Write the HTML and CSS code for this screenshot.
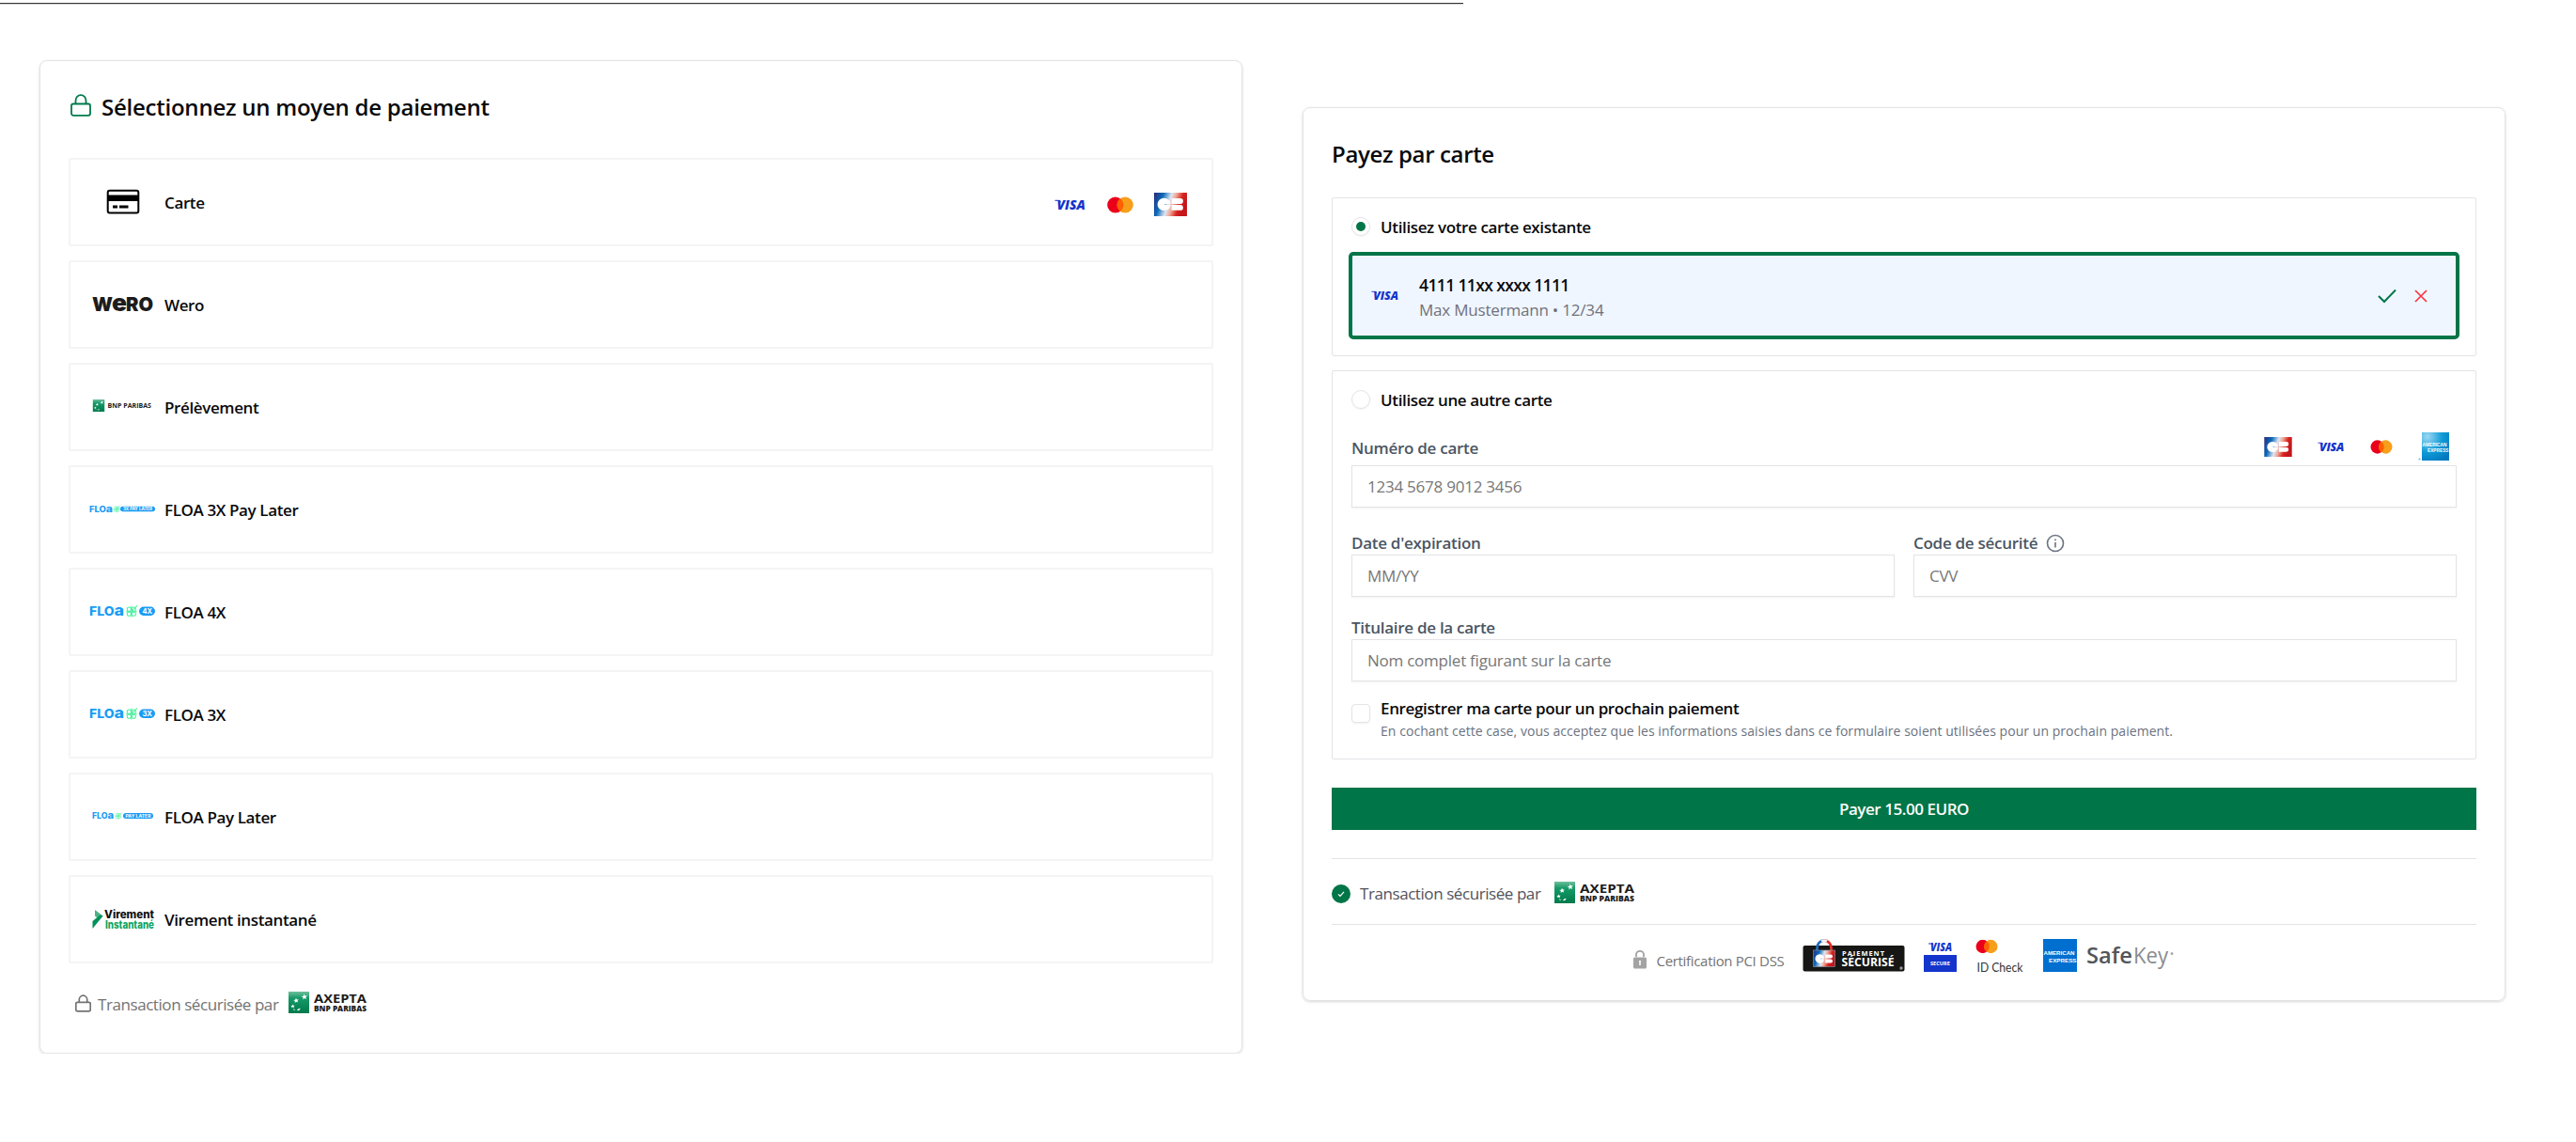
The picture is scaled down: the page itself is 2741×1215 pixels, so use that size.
FILE: index.html
```html
<!DOCTYPE html>
<html lang="fr">

<head>
    <meta charset="UTF-8">
    <meta name="viewport" content="width=device-width, initial-scale=1.0">
    <title>Paiement</title>
    <link rel="stylesheet" href="styles.css">
</head>

<body>
    <!-- shared shapes -->
    <svg class="defs" width="0" height="0">
        <defs>
            <linearGradient id="cbGrad" x1="0" y1="0" x2="1" y2="0.25">
                <stop offset="0" stop-color="#2b2a7c" />
                <stop offset="0.28" stop-color="#0a6ab8" />
                <stop offset="0.52" stop-color="#dfe6f2" />
                <stop offset="0.66" stop-color="#f0a898" />
                <stop offset="0.85" stop-color="#d8231f" />
                <stop offset="1" stop-color="#c4161c" />
            </linearGradient>
            <linearGradient id="bnpGrad" x1="0" y1="0" x2="0" y2="1">
                <stop offset="0" stop-color="#6fbf9b" />
                <stop offset="0.3" stop-color="#169a68" />
                <stop offset="1" stop-color="#007a4b" />
            </linearGradient>
            <radialGradient id="amexGrad" cx="0.2" cy="0.15" r="1">
                <stop offset="0" stop-color="#9bd8f3" />
                <stop offset="0.55" stop-color="#109bd7" />
                <stop offset="1" stop-color="#0078bf" />
            </radialGradient>
        </defs>
        <symbol id="mastercard" viewBox="0 0 28 18">
            <circle cx="8.8" cy="9" r="8.6" fill="#eb001b" />
            <circle cx="19.2" cy="9" r="8.6" fill="#f79e1b" />
            <path d="M14 2.2a8.6 8.6 0 0 1 0 13.6a8.6 8.6 0 0 1 0-13.6z" fill="#ff5f00" />
        </symbol>
        <symbol id="cb" viewBox="0 0 35 25">
            <rect width="35" height="25" fill="url(#cbGrad)" />
            <path d="M17.6 11.9H11v1.1h6.6a7 6.6 0 1 1 0-1.1z" fill="#fff" />
            <path d="M18.6 6.1H28a2.9 2.9 0 0 1 0 5.8h-9.4zM18.6 13H28a2.9 2.9 0 0 1 0 5.8h-9.4z" fill="#fff" />
        </symbol>
        <symbol id="bnp" viewBox="0 0 22 23">
            <rect width="22" height="23" fill="url(#bnpGrad)" />
            <path d="M16.5 2.5l1 2 2.3-.4-1.5 1.8 1 2-2.2-.9-1.7 1.5.2-2.3-2-1 2.3-.5zM8 6.8l.9 1.7 2-.2-1.4 1.5.6 1.8-1.8-.8-1.6 1.2.2-1.9-1.7-1 1.9-.4zM4.3 13.5l.7 1.3 1.6-.1-1 1.1.4 1.4-1.4-.6-1.2.9.1-1.5-1.3-.8 1.5-.3zM10 18.5l2.8-.8-1.5 2.2-2.3.3zM5.5 18l1.8 1.8-2-.2z" fill="#fff" />
        </symbol>
        <symbol id="clover" viewBox="0 0 13 13">
            <g fill="none" stroke="#4df0a0" stroke-width="1">
                <circle cx="3.700" cy="4.500" r="2" />
                <circle cx="8.500" cy="4.500" r="2" />
                <circle cx="3.700" cy="9.300" r="2" />
                <circle cx="8.500" cy="9.300" r="2" />
                <path d="M6.100 6.900L12 0.800M6.100 1v11.500M0.500 6.900h11.200" />
            </g>
        </symbol>
        <symbol id="lock" viewBox="0 0 22 24">
            <rect x="1" y="10.500" width="20" height="12.300" rx="2" />
            <path d="M5.500 10.500V7a5.500 5.800 0 0 1 11 0v3.500" />
        </symbol>
    </svg>

    <div class="top-line"></div>

    <div class="page">
        <div class="card methods">
            <h2 class="title">
                <svg class="title-lock" width="22" height="24"><use href="#lock" /></svg>
                <span>Sélectionnez un moyen de paiement</span>
            </h2>

            <div class="method-list">
                <div class="method">
                    <svg class="method-logo" viewBox="0 0 70 30">
                        <rect x="19.700" y="2.700" width="32.600" height="23.800" rx="2" fill="none" stroke="#000" stroke-width="2" />
                        <path d="M19 7.500h34v6.500H19zM25 18.500h5v3h-5zM32 18.500h9.500v3H32z" />
                    </svg>
                    <span class="method-name">Carte</span>
                    <div class="brands">
                        <svg width="34" height="12" viewBox="0 0 34 12">
                            <path class="visa-flag" d="M0.500 1.300h5l1 2" />
                            <text class="visa-text" x="2.500" y="11" textLength="30.500" lengthAdjust="spacingAndGlyphs">VISA</text>
                        </svg>
                        <svg width="28" height="18"><use href="#mastercard" /></svg>
                        <svg width="35" height="25"><use href="#cb" /></svg>
                    </div>
                </div>
                <div class="method">
                    <svg class="method-logo" viewBox="0 0 70 30">
                        <text class="wero" x="3" y="21.500" textLength="22" lengthAdjust="spacingAndGlyphs">W</text>
                        <text class="wero wero-e" x="24" y="21.500" textLength="16" lengthAdjust="spacingAndGlyphs">e</text>
                        <text class="wero" x="39" y="21.500" textLength="29" lengthAdjust="spacingAndGlyphs">RO</text>
                    </svg>
                    <span class="method-name">Wero</span>
                </div>
                <div class="method">
                    <svg class="method-logo" viewBox="0 0 70 30">
                        <use href="#bnp" x="3" y="7" width="14" height="13" />
                        <text class="bnp-text" x="19.500" y="16" textLength="46.500" lengthAdjust="spacingAndGlyphs">BNP PARIBAS</text>
                    </svg>
                    <span class="method-name">Prélèvement</span>
                </div>
                <div class="method">
                    <svg class="method-logo" viewBox="0 0 70 30">
                        <text class="floa floa-s" x="0" y="17.500" textLength="25" lengthAdjust="spacingAndGlyphs">FLO<tspan class="floa-a-s">a</tspan></text>
                        <use href="#clover" x="25.500" y="10.500" width="8" height="8" />
                        <rect x="33" y="11.800" width="37" height="5.400" rx="2.700" fill="#1a9cf5" />
                        <text class="pill pill-s" x="36" y="16.200" textLength="31" lengthAdjust="spacingAndGlyphs">3X PAY LATER</text>
                    </svg>
                    <span class="method-name">FLOA 3X Pay Later</span>
                </div>
                <div class="method">
                    <svg class="method-logo" viewBox="0 0 70 30">
                        <text class="floa" x="0" y="18.800" textLength="37" lengthAdjust="spacingAndGlyphs">FLO<tspan class="floa-a">a</tspan></text>
                        <use href="#clover" x="38.500" y="7.500" width="13.500" height="13.500" />
                        <rect x="53" y="9.500" width="17" height="9.500" rx="4.700" fill="#1a9cf5" />
                        <text class="pill" x="56.500" y="17" textLength="10.500" lengthAdjust="spacingAndGlyphs">4X</text>
                    </svg>
                    <span class="method-name">FLOA 4X</span>
                </div>
                <div class="method">
                    <svg class="method-logo" viewBox="0 0 70 30">
                        <text class="floa" x="0" y="18.800" textLength="37" lengthAdjust="spacingAndGlyphs">FLO<tspan class="floa-a">a</tspan></text>
                        <use href="#clover" x="38.500" y="7.500" width="13.500" height="13.500" />
                        <rect x="53" y="9.500" width="17" height="9.500" rx="4.700" fill="#1a9cf5" />
                        <text class="pill" x="56.500" y="17" textLength="10.500" lengthAdjust="spacingAndGlyphs">3X</text>
                    </svg>
                    <span class="method-name">FLOA 3X</span>
                </div>
                <div class="method">
                    <svg class="method-logo" viewBox="0 0 70 30">
                        <text class="floa floa-s" x="3" y="17" textLength="23" lengthAdjust="spacingAndGlyphs">FLO<tspan class="floa-a-s">a</tspan></text>
                        <use href="#clover" x="27" y="10" width="8" height="8" />
                        <rect x="36" y="11" width="32" height="6" rx="3" fill="#1a9cf5" />
                        <text class="pill pill-s" x="38.500" y="15.700" textLength="27" lengthAdjust="spacingAndGlyphs">PAY LATER</text>
                    </svg>
                    <span class="method-name">FLOA Pay Later</span>
                </div>
                <div class="method">
                    <svg class="method-logo" viewBox="0 0 70 30">
                        <path d="M6 5l8.500 6.500-3.500 4-5-4z" fill="#4fb286" />
                        <path d="M14.500 11.500L3.500 25v-8l8-6.500z" fill="#00915a" />
                        <text class="vir" x="16" y="14.300" textLength="53" lengthAdjust="spacingAndGlyphs">Virement</text>
                        <text class="vir vir-green" x="17" y="24.500" textLength="52" lengthAdjust="spacingAndGlyphs">Instantané</text>
                    </svg>
                    <span class="method-name">Virement instantané</span>
                </div>
            </div>

            <div class="secured">
                <svg class="secured-lock" width="17" height="19"><use href="#lock" /></svg>
                <span class="secured-text">Transaction sécurisée par</span>
                <svg class="secured-logo" width="84" height="24" viewBox="0 0 84 24">
                    <use href="#bnp" width="22" height="23" />
                    <text class="axepta-name" x="27" y="11.800" textLength="56" lengthAdjust="spacingAndGlyphs">AXEPTA</text>
                    <text class="axepta-sub" x="27" y="20.500" textLength="56" lengthAdjust="spacingAndGlyphs">BNP PARIBAS</text>
                </svg>
            </div>
        </div>

        <div class="card payment">
            <h2 class="title pay-title">Payez par carte</h2>

            <div class="box existing">
                <div class="radio-row">
                    <span class="radio checked"></span>
                    <span class="strong">Utilisez votre carte existante</span>
                </div>
                <div class="saved-card">
                    <svg width="30" height="11" viewBox="0 0 34 12">
                        <path class="visa-flag" d="M0.500 1.300h5l1 2" />
                        <text class="visa-text" x="2.500" y="11" textLength="30.500" lengthAdjust="spacingAndGlyphs">VISA</text>
                    </svg>
                    <div class="saved-info">
                        <div class="saved-number">4111 11xx xxxx 1111</div>
                        <div class="saved-holder">Max Mustermann • 12/34</div>
                    </div>
                    <svg class="check" width="20" height="16" viewBox="0 0 20 16"><path d="M1 8l6 6L19 1.500" /></svg>
                    <svg class="cross" width="14" height="14" viewBox="0 0 14 14"><path d="M1 1l12 12M13 1L1 13" /></svg>
                </div>
            </div>

            <div class="box other">
                <div class="radio-row">
                    <span class="radio"></span>
                    <span class="strong">Utilisez une autre carte</span>
                </div>
                <div class="label number-label">
                    <span class="number-text">Numéro de carte</span>
                    <div class="number-brands">
                        <svg width="30" height="21"><use href="#cb" /></svg>
                        <svg width="29" height="10.500" viewBox="0 0 34 12">
                            <path class="visa-flag" d="M0.500 1.300h5l1 2" />
                            <text class="visa-text" x="2.500" y="11" textLength="30.500" lengthAdjust="spacingAndGlyphs">VISA</text>
                        </svg>
                        <svg width="24" height="15"><use href="#mastercard" /></svg>
                        <svg width="33" height="30" viewBox="0 0 33 30">
                            <rect x="4" width="29" height="30" fill="url(#amexGrad)" />
                            <text class="amex" x="4.500" y="15" textLength="26" lengthAdjust="spacingAndGlyphs">AMERICAN</text>
                            <text class="amex" x="10" y="21" textLength="22.500" lengthAdjust="spacingAndGlyphs">EXPRESS</text>
                            <circle cx="1.500" cy="28.500" r="1.100" fill="#6fc0e6" />
                        </svg>
                    </div>
                </div>
                <input class="field" type="text" placeholder="1234 5678 9012 3456">
                <div class="columns">
                    <div>
                        <div class="label">Date d'expiration</div>
                        <input class="field" type="text" placeholder="MM/YY">
                    </div>
                    <div>
                        <div class="label">Code de sécurité
                            <svg class="info" width="20" height="20" viewBox="0 0 20 20"><circle cx="10" cy="10" r="8.500" /><path d="M10 9v5.500M10 5.500v1.700" /></svg>
                        </div>
                        <input class="field" type="text" placeholder="CVV">
                    </div>
                </div>
                <div class="label holder-label">Titulaire de la carte</div>
                <input class="field" type="text" placeholder="Nom complet figurant sur la carte">
                <div class="save-row">
                    <span class="checkbox"></span>
                    <div>
                        <div class="strong">Enregistrer ma carte pour un prochain paiement</div>
                        <div class="save-note">En cochant cette case, vous acceptez que les informations saisies dans ce formulaire soient utilisées pour un prochain paiement.</div>
                    </div>
                </div>
            </div>

            <button class="pay" type="button">Payer 15.00 EURO</button>

            <div class="secured-right">
                <svg width="20" height="20" viewBox="0 0 20 20">
                    <circle cx="10" cy="10" r="10" fill="#007547" />
                    <path d="M7 10.300l2 2 4-4.500" fill="none" stroke="#fff" stroke-width="1.200" />
                </svg>
                <span class="secured-text">Transaction sécurisée par</span>
                <svg class="secured-logo" width="86" height="24" viewBox="0 0 86 24">
                    <use href="#bnp" width="22" height="23" />
                    <text class="axepta-name" x="27" y="11.800" textLength="58" lengthAdjust="spacingAndGlyphs">AXEPTA</text>
                    <text class="axepta-sub" x="27" y="20.500" textLength="58" lengthAdjust="spacingAndGlyphs">BNP PARIBAS</text>
                </svg>
            </div>

            <div class="certifications">
                <svg class="pci-lock" width="14" height="20" viewBox="0 0 14 20">
                    <rect y="7.500" width="14" height="12" rx="1.500" fill="#a3a3a3" />
                    <path d="M3 7V4.500a4 3.700 0 0 1 8 0V7" fill="none" stroke="#a3a3a3" stroke-width="1.800" />
                    <path d="M7 11v5M6 11.800h2" stroke="#fff" stroke-width="1.500" />
                </svg>
                <span class="pci">Certification PCI DSS</span>
                <svg width="109" height="36" viewBox="0 0 109 36">
                    <rect x="0.500" y="7" width="108" height="27.500" rx="2" fill="#161615" />
                    <path d="M15.500 13V9.500a7.500 8 0 0 1 7.500-8" fill="none" stroke="#1e6dbb" stroke-width="2.800" />
                    <path d="M23 1.500a7.500 8 0 0 1 7.500 8V13" fill="none" stroke="#e0302c" stroke-width="2.800" />
                    <path d="M20 2.300a7.500 8 0 0 1 6 0" fill="none" stroke="#f2f2f2" stroke-width="2.800" />
                    <rect x="11.500" y="12" width="23" height="17.500" fill="url(#cbGrad)" stroke="#8a9bb0" stroke-width="0.600" />
                    <path d="M23 20.500h-4v1h4a4.800 4.600 0 1 1 0-1zM24.200 16.500H30a2 2 0 0 1 0 4h-5.800zM24.200 21.500H30a2 2 0 0 1 0 4h-5.800z" fill="#fff" />
                    <text class="badge-small" x="42" y="17.500" textLength="45" lengthAdjust="spacing">PAIEMENT</text>
                    <text class="badge-big" x="41.500" y="29.300" textLength="56" lengthAdjust="spacingAndGlyphs">SÉCURISÉ</text>
                    <circle cx="105" cy="31" r="1.700" fill="#999" />
                </svg>
                <svg class="cert-logo" width="35" height="36" viewBox="0 0 35 36">
                    <path class="visa-flag" d="M5 5h4l1 1.500" />
                    <text class="visa-text visa-small" x="7" y="13" textLength="23" lengthAdjust="spacingAndGlyphs">VISA</text>
                    <rect y="17" width="35" height="18" fill="#1434cb" />
                    <text class="secure-text" x="7" y="28" textLength="21" lengthAdjust="spacingAndGlyphs">SECURE</text>
                </svg>
                <svg class="cert-logo" width="52" height="38" viewBox="0 0 52 38">
                    <use href="#mastercard" x="0" y="0.500" width="24" height="15" />
                    <text class="id-text" x="1.500" y="35" textLength="49" lengthAdjust="spacingAndGlyphs">ID Check</text>
                </svg>
                <svg class="cert-logo" width="140" height="36" viewBox="0 0 140 36">
                    <rect width="36" height="35" fill="#016fd0" />
                    <text class="amex" x="0.500" y="16.500" textLength="33" lengthAdjust="spacingAndGlyphs">AMERICAN</text>
                    <text class="amex" x="6" y="25" textLength="29.500" lengthAdjust="spacingAndGlyphs">EXPRESS</text>
                    <text class="safe" x="46" y="26" textLength="49" lengthAdjust="spacingAndGlyphs">Safe</text>
                    <text class="key" x="96" y="26" textLength="37" lengthAdjust="spacingAndGlyphs">Key</text>
                    <circle cx="137" cy="15.500" r="1.500" fill="#aaa" />
                </svg>
            </div>
        </div>
    </div>
</body>

</html>
```
FILE: styles.css
```css
* {
    box-sizing: border-box;
}

body {
    margin: 0;
    background-color: #fff;
    font-family: "Open Sans", "Noto Sans", sans-serif;
    font-size: 17px;
    line-height: 24px;
    color: #09090b;
}

svg {
    display: block;
    flex-shrink: 0;
    overflow: visible;
}

.defs {
    position: absolute;
}

.top-line {
    width: 1557px;
    height: 5px;
    background: linear-gradient(#fff 3px, #333 3px, #333 4px, #d4d4d4 4px);
}

.page {
    display: flex;
    align-items: flex-start;
    gap: 64px;
    padding: 59px 75px 0 42px;
}

.card {
    width: 1280px;
    border: 1px solid #e4e4e7;
    border-radius: 8px;
    box-shadow: 0 1px 3px rgba(0, 0, 0, 0.16);
    padding: 30px;
}

.methods {
    height: 1057px;
}

.payment {
    height: 951px;
    margin-top: 50px;
}

.title {
    display: flex;
    align-items: center;
    height: 38px;
    margin: 0;
    font-size: 24px;
    font-weight: 600;
    letter-spacing: -0.24px;
}

.pay-title {
    letter-spacing: -0.35px;
}

.title-lock {
    margin: -4px 11px 0 2px;
    fill: none;
    stroke: #007a4b;
    stroke-width: 1.8;
}

.method-list {
    display: flex;
    flex-direction: column;
    gap: 15px;
    margin-top: 35px;
}

.method {
    display: flex;
    align-items: center;
    height: 94px;
    border: 2px solid #f4f4f5;
    border-radius: 2px;
    padding: 0 26px 0 20px;
}

.method-logo {
    width: 70px;
    height: 30px;
    margin-right: 10px;
}

.method-name {
    padding-top: 1px;
    font-weight: 600;
    letter-spacing: -0.38px;
}

.brands {
    display: flex;
    align-items: center;
    gap: 22px;
    margin-left: auto;
    padding-top: 5px;
}

.visa-text {
    font: italic 800 14px "Open Sans", sans-serif;
    fill: #1434cb;
}

.visa-small {
    font-size: 12px;
}

.visa-flag {
    fill: none;
    stroke: #1434cb;
    stroke-width: 1;
}

.wero {
    font: 900 20px Inter, sans-serif;
    fill: #1d1c1c;
}

.wero-e {
    font-size: 26px;
}

.bnp-text {
    font: 700 6.5px "Open Sans", sans-serif;
    fill: #222;
}

.floa {
    font: 800 12.5px Inter, sans-serif;
    fill: #1a9cf5;
}

.floa-a {
    font-size: 16px;
}

.floa-s {
    font-size: 8.5px;
}

.floa-a-s {
    font-size: 11px;
}

.pill {
    font: 700 7.5px Inter, sans-serif;
    fill: #fff;
}

.pill-s {
    font-size: 4.5px;
}

.vir {
    font: 800 11.5px Inter, sans-serif;
    fill: #111;
}

.vir-green {
    fill: #10a562;
}

.secured {
    display: flex;
    align-items: center;
    height: 24px;
    margin-top: 31px;
    padding-left: 7px;
    color: #737373;
}

.secured-lock {
    margin: -2px 7px 0 0;
    fill: none;
    stroke: #737373;
    stroke-width: 2.2;
}

.secured-text {
    padding-top: 1px;
    letter-spacing: -0.43px;
}

.secured-logo {
    margin: -2px 0 0 11px;
}

.axepta-name {
    font: 700 12.5px "Open Sans", sans-serif;
    fill: #1b1b1b;
}

.axepta-sub {
    font: 800 8px "Open Sans", sans-serif;
    fill: #1b1b1b;
}

.box {
    border: 1px solid #e4e4e7;
    border-radius: 2px;
    padding: 20px;
}

.existing {
    height: 169px;
    margin-top: 27px;
}

.other {
    height: 414px;
    margin-top: 15px;
}

.radio-row {
    display: flex;
    align-items: center;
    gap: 11px;
    height: 20px;
}

.radio-row .strong {
    padding-top: 2px;
}

.radio {
    display: flex;
    align-items: center;
    justify-content: center;
    width: 20px;
    height: 20px;
    border: 1px solid #e4e4e7;
    border-radius: 50%;
    box-shadow: 0 1px 2px rgba(0, 0, 0, 0.06);
}

.checked::after {
    content: "";
    width: 10px;
    height: 10px;
    border-radius: 50%;
    background-color: #007547;
}

.strong {
    font-weight: 600;
    letter-spacing: -0.36px;
}

.saved-card {
    display: flex;
    align-items: center;
    height: 93px;
    margin: 17px -3px 0;
    padding: 0 30px 0 20px;
    border: 4px solid #007547;
    border-radius: 5px;
    background-color: #eff6ff;
}

.saved-info {
    flex: 1;
    margin-left: 21px;
    padding-top: 4px;
}

.saved-number {
    height: 27px;
    font-size: 17.5px;
    font-weight: 600;
    letter-spacing: -0.62px;
}

.saved-holder {
    color: #71717a;
    letter-spacing: -0.2px;
}

.check {
    margin-right: 19px;
    fill: none;
    stroke: #007547;
    stroke-width: 2;
}

.cross {
    fill: none;
    stroke: #fb3640;
    stroke-width: 1.7;
}

.label {
    display: flex;
    align-items: center;
    height: 24px;
    font-weight: 600;
    letter-spacing: -0.28px;
    color: #4b5563;
}

.number-label {
    height: 30px;
    margin: 25px 0 5px;
}

.number-text {
    padding-top: 3px;
}

.number-brands {
    display: flex;
    align-items: center;
    gap: 27px;
    margin-left: auto;
    padding-right: 8px;
}

.amex {
    font: 700 6px "Liberation Sans", sans-serif;
    letter-spacing: 0;
    fill: #fff;
}

.field {
    display: block;
    width: 100%;
    height: 45px;
    padding: 0 16px;
    border: 1px solid #e4e4e7;
    border-radius: 0;
    box-shadow: 0 1px 2px rgba(0, 0, 0, 0.06);
    background-color: #fff;
    font-family: inherit;
    font-size: 17px;
    letter-spacing: -0.24px;
}

.field::placeholder {
    color: #777;
    opacity: 1;
}

.columns {
    display: grid;
    grid-template-columns: 1fr 1fr;
    gap: 20px;
    margin-top: 26px;
}

.info {
    margin: -1px 0 0 9px;
    fill: none;
    stroke: #6b7280;
    stroke-width: 1.6;
}

.holder-label {
    margin-top: 21px;
}

.save-row {
    display: flex;
    align-items: center;
    gap: 11px;
    margin-top: 17px;
}

.checkbox {
    width: 20px;
    height: 20px;
    margin-top: -14px;
    border: 1px solid #e4e4e7;
    border-radius: 4px;
    box-shadow: 0 1px 2px rgba(0, 0, 0, 0.06);
}

.save-note {
    font-size: 14px;
    letter-spacing: 0.05px;
    color: #6b7280;
}

.pay {
    display: block;
    width: 100%;
    height: 45px;
    margin-top: 30px;
    border: none;
    background-color: #007547;
    color: #fff;
    font-family: inherit;
    font-size: 17px;
    font-weight: 600;
    letter-spacing: -0.45px;
}

.secured-right {
    display: flex;
    align-items: center;
    height: 71px;
    margin-top: 30px;
    padding-top: 4px;
    border-top: 1px solid #e4e4e7;
    border-bottom: 1px solid #e4e4e7;
    color: #52525b;
}

.secured-right .secured-text {
    margin-left: 10px;
}

.secured-right .secured-logo {
    margin-left: 15px;
}

.certifications {
    display: flex;
    align-items: flex-start;
    justify-content: center;
    padding-top: 15px;
    color: #737373;
}

.pci-lock {
    margin-top: 12px;
}

.pci {
    margin: 11px 20px 0 11px;
    font-size: 15px;
    letter-spacing: -0.32px;
}

.cert-logo {
    margin-left: 20px;
}

.badge-small {
    font: 700 7.5px "Open Sans", sans-serif;
    fill: #fff;
}

.badge-big {
    font: 700 11.5px "Open Sans", sans-serif;
    fill: #fff;
}

.secure-text {
    font: 700 5px "Open Sans", sans-serif;
    fill: #fff;
}

.id-text {
    font: 400 14px Lato, sans-serif;
    fill: #333;
}

.safe {
    font: 600 24px "Open Sans", sans-serif;
    fill: #53565a;
}

.key {
    font: 400 24px "Open Sans", sans-serif;
    fill: #8a8c8f;
}
```
